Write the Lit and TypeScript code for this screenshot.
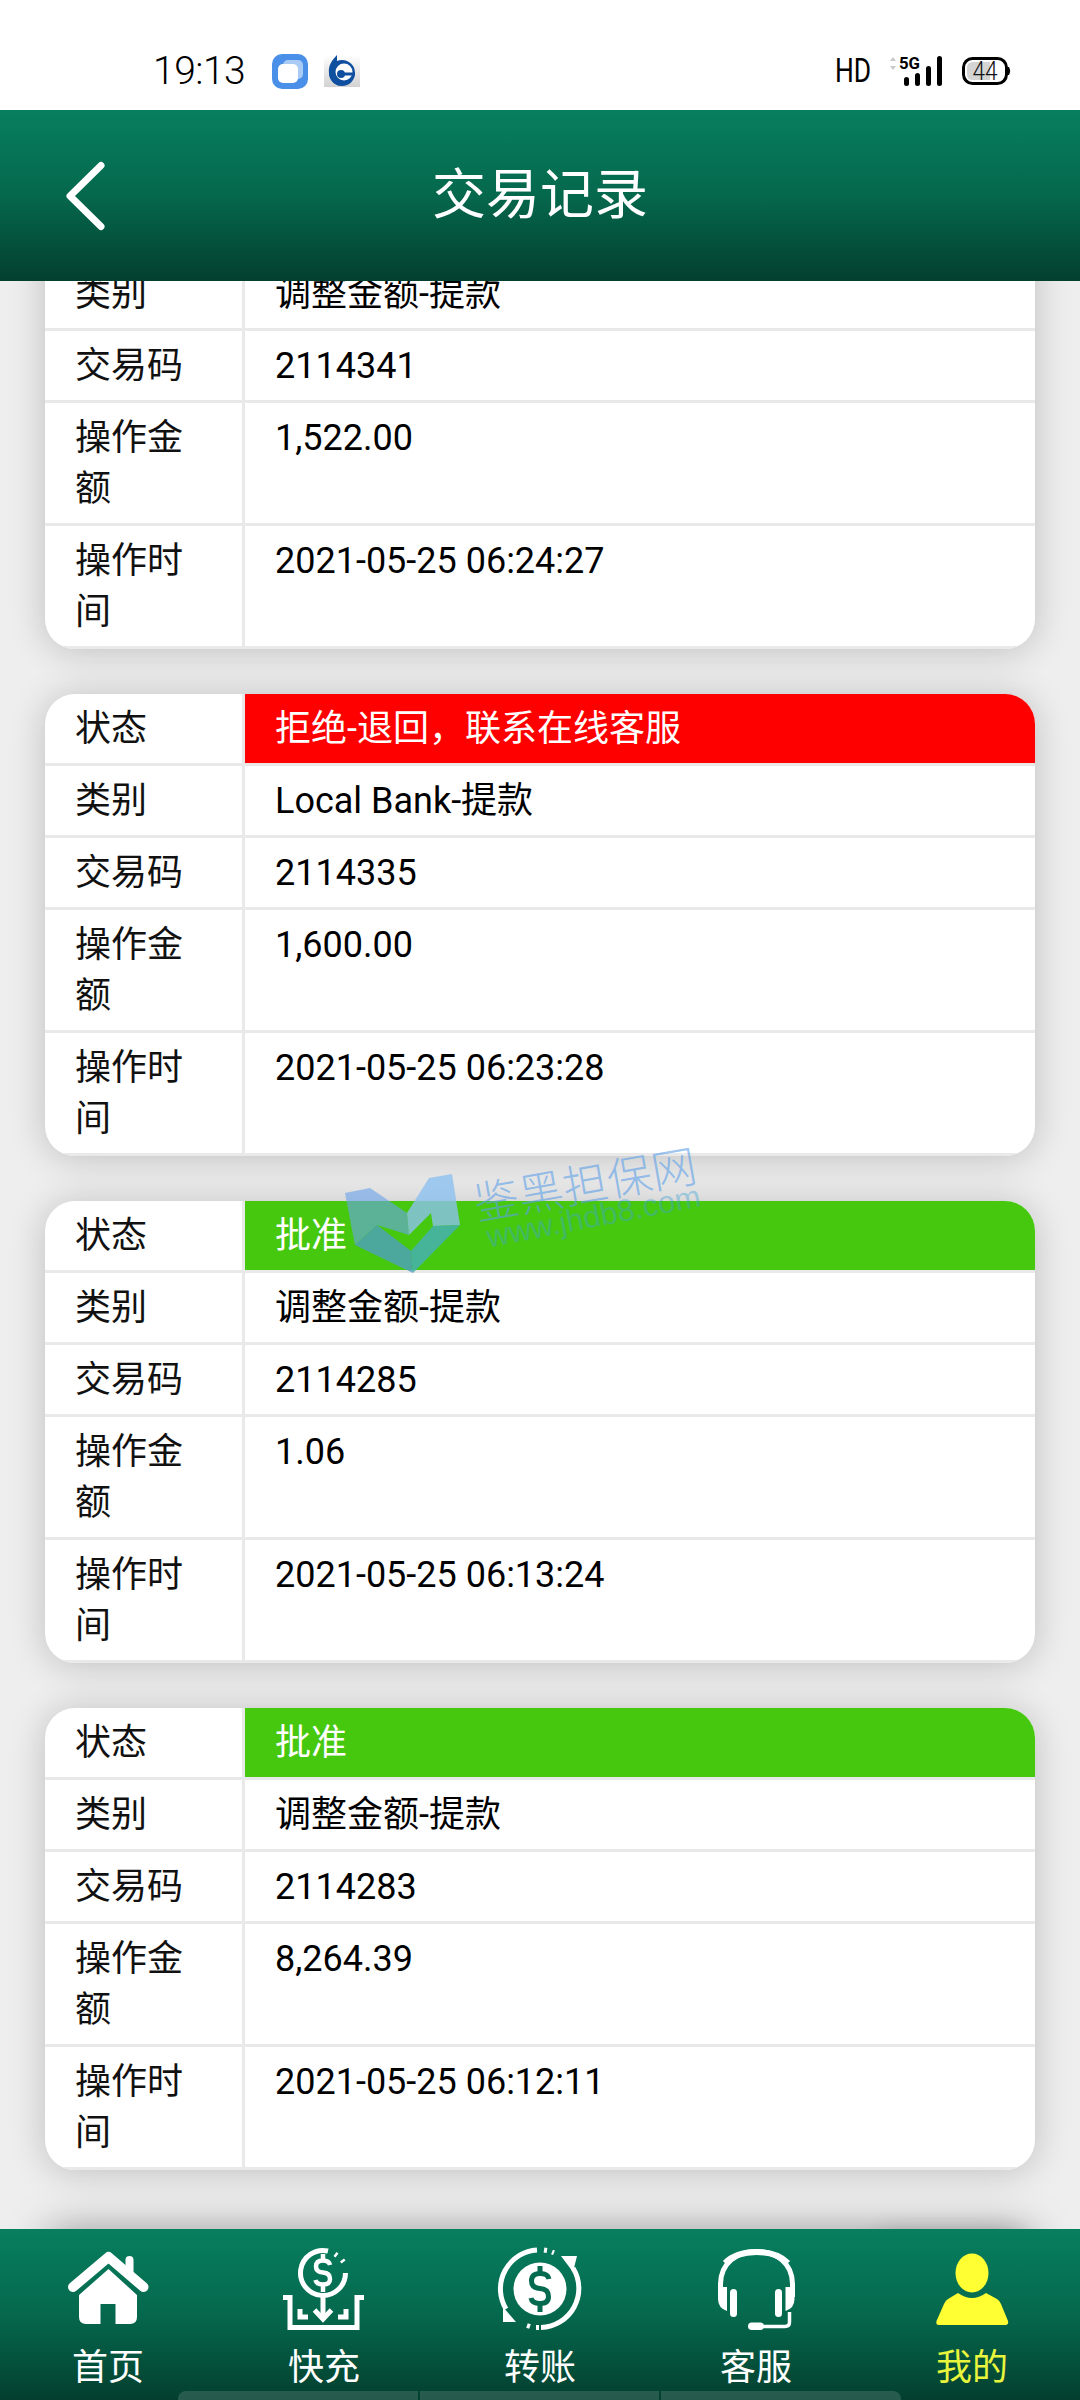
import { LitElement, html, css, svg } from "lit";
import { customElement } from "lit/decorators.js";

type Rec = { status: string; tone: string; kind: string; code: string; amount: string; time: string };

const RECORDS: Rec[] = [
  { status: "批准", tone: "ok", kind: "调整金额-提款", code: "2114341", amount: "1,522.00", time: "2021-05-25 06:24:27" },
  { status: "拒绝-退回，联系在线客服", tone: "bad", kind: "Local Bank-提款", code: "2114335", amount: "1,600.00", time: "2021-05-25 06:23:28" },
  { status: "批准", tone: "ok", kind: "调整金额-提款", code: "2114285", amount: "1.06", time: "2021-05-25 06:13:24" },
  { status: "批准", tone: "ok", kind: "调整金额-提款", code: "2114283", amount: "8,264.39", time: "2021-05-25 06:12:11" },
];

const homeIcon = svg`<g transform="translate(-68 -2252)" fill="#fff" stroke="none">
  <path d="M73 2288 L108.5 2258 L143.5 2288" fill="none" stroke="#fff" stroke-width="10" stroke-linecap="round" stroke-linejoin="round"/>
  <path d="M129.500 2274 V2261" fill="none" stroke="#fff" stroke-width="8" stroke-linecap="round"/>
  <path fill-rule="evenodd" d="M108.500 2270 L137 2296 V2318 Q137 2325 130 2325 H115.500 V2305 H100.500 V2325 H86 Q79 2325 79 2318 V2296 Z"/>
</g>`;

const depositIcon = svg`<g transform="translate(-280 -2245)" fill="none" stroke="#fff" stroke-width="5">
  <path d="M329 2250 A22.500 22.500 0 1 0 346.500 2272"/>
  <path d="M336 2253 L338 2254.500 M343 2259 L344.500 2261" stroke-width="5"/>
  <path d="M331 2264 Q330 2259.500 324 2259.500 Q317 2259.500 317 2265.500 Q317 2271 324 2271.500 Q331 2272 331 2278 Q331 2283.500 324 2283.500 Q317.500 2283.500 316.500 2279" stroke-width="4.500"/>
  <path d="M324 2253 V2259 M324 2284 V2291" stroke-width="4.500"/>
  <path d="M324 2295 V2316" stroke-width="5"/>
  <path d="M315.500 2309 L324 2318 L332.500 2309" stroke-width="5"/>
  <path d="M284 2296.500 H291 V2326.500 H358 V2296.500 H365"/>
  <path d="M301 2308 V2316 H309 M347 2308 V2316 H339" stroke-width="5"/>
</g>`;

const transferIcon = svg`<g transform="translate(-498 -2246)" fill="none" stroke="#fff" stroke-width="5">
  <circle cx="540" cy="2289" r="26.500" fill="#fff" stroke="none"/>
  <path d="M549 2279 Q548 2273.500 540 2273.500 Q531.500 2273.500 531.500 2281 Q531.500 2288 540 2288.500 Q548.500 2289 548.500 2296.500 Q548.500 2303.500 540 2303.500 Q532 2303.500 531 2298" stroke="#046a4f" stroke-width="5"/>
  <path d="M540 2266 V2274 M540 2304 V2312" stroke="#046a4f" stroke-width="5"/>
  <path d="M537 2250 A39 39 0 0 0 506 2309"/>
  <path d="M503 2307 V2322 H516 Z" fill="#fff" stroke="none"/>
  <path d="M541 2327.500 A39 39 0 0 0 573 2268"/>
  <path d="M577 2256 H561 L573 2272 Z" fill="#fff" stroke="none"/>
  <path d="M544 2250 L547 2250.500 M552 2252 L554 2252.800 M527 2325.500 L530 2326.500 M536 2327.500 L539 2327.500"/>
</g>`;

const headsetIcon = svg`<g transform="translate(-714 -2245)" fill="none" stroke="#fff">
  <path d="M720.500 2296 V2283 C720.500 2262 737 2250.500 756.500 2250.500 C776 2250.500 792.500 2262 792.500 2283 V2296" stroke-width="5"/>
  <path d="M725 2262 C733 2254 745 2251 756.500 2251 C768 2251 780 2254 788 2262" stroke-width="6"/>
  <rect x="730" y="2288" width="7" height="28" rx="3.500" fill="#fff" stroke="none"/>
  <rect x="775" y="2288" width="7" height="28" rx="3.500" fill="#fff" stroke="none"/>
  <path d="M718 2286 H727 V2310 Q718 2307 718 2298 Z" fill="#fff" stroke="none"/>
  <path d="M794.500 2286 H785.500 V2310 Q794.500 2307 794.500 2298 Z" fill="#fff" stroke="none"/>
  <path d="M789.500 2311 V2321 Q789.500 2325.500 785 2325.500 H760" stroke-width="3.500"/>
  <rect x="748" y="2321.500" width="16" height="7.500" rx="3.750" fill="#fff" stroke="none"/>
</g>`;

const personIcon = svg`<g transform="translate(-932 -2250)" fill="#ffff33">
  <ellipse cx="972" cy="2272" rx="16.500" ry="19.500"/>
  <path d="M958 2292 Q972 2302 986 2292 L997 2298 Q1000 2300 1001 2303 L1008 2320 Q1009 2324 1005 2324 H939 Q935.500 2324 936.500 2320 L944 2303 Q945 2300 948 2298 Z"/>
</g>`;

const TABS = [
  { label: "首页", w: 80, h: 76, icon: homeIcon },
  { label: "快充", w: 90, h: 86, icon: depositIcon },
  { label: "转账", w: 84, h: 86, icon: transferIcon },
  { label: "客服", w: 84, h: 86, icon: headsetIcon },
  { label: "我的", w: 80, h: 76, icon: personIcon, active: true },
];

@customElement("app-root")
export class AppRoot extends LitElement {
  static styles = css`
    :host {
      display: block;
      width: 1080px;
      height: 2400px;
      font-family: Roboto, "Noto Sans CJK SC", sans-serif;
      color: #111;
    }
    .page {
      position: relative;
      display: flex;
      flex-direction: column;
      height: 2400px;
      overflow: hidden;
      background: #eeeeee;
    }
    .status {
      display: flex;
      justify-content: space-between;
      align-items: center;
      box-sizing: border-box;
      height: 110px;
      padding: 32px 69px 0 153px;
      background: #fff;
      flex: none;
    }
    .status-left, .status-right { display: flex; align-items: center; }
    .time {
      width: 119px;
      font-size: 39px;
      font-weight: 300;
      line-height: 40px;
      letter-spacing: -0.5px;
      color: #000;
    }
    .app-a { margin-right: 16px; }
    .hd {
      display: block;
      width: 36px;
      margin-right: 15px;
      font-size: 33px;
      line-height: 34px;
      color: #000;
      transform: scaleX(0.8);
      transform-origin: left center;
      white-space: nowrap;
    }
    .signal { margin-right: 20px; }
    svg { display: block; overflow: visible; }
    .head {
      position: relative;
      display: flex;
      align-items: center;
      justify-content: center;
      flex: none;
      height: 171px;
      background: linear-gradient(180deg, #077f5f 0%, #05684d 50%, #033f2e 100%);
      color: #fff;
      font-size: 54px;
      line-height: 60px;
      z-index: 2;
    }
    .back { position: absolute; left: 60px; top: 48px; }
    .list {
      position: relative;
      flex: 1;
      min-height: 0;
      overflow: hidden;
    }
    .rows {
      display: flex;
      flex-direction: column;
      gap: 45px;
      padding: 0 45px;
      margin-top: -94px;
    }
    .card {
      flex: none;
      background: #fff;
      border-radius: 30px;
      overflow: hidden;
      box-shadow: 0 2px 36px rgba(0, 0, 0, 0.2);
    }
    .row { display: flex; border-bottom: 3px solid #e9e9e9; }
    .label, .value {
      box-sizing: border-box;
      padding: 10px 30px 8px;
      font-size: 36px;
      line-height: 51px;
    }
    .label {
      flex: none;
      width: 200px;
      border-right: 3px solid #e9e9e9;
    }
    .value { flex: 1; min-width: 0; color: #000; }
    .ok { background: #46c80f; color: #fff; }
    .bad { background: #ff0000; color: #fff; }
    .shade {
      flex: none;
      height: 40px;
      margin-top: 14px;
      border-radius: 30px;
      background: #bdbdbd;
      box-shadow: 0 0 40px rgba(0, 0, 0, 0.36);
    }
    .lift {
      position: absolute;
      right: 55px;
      bottom: -44px;
      width: 150px;
      height: 34px;
      border-radius: 20px;
      background: #999;
      box-shadow: 0 0 26px rgba(0, 0, 0, 0.32);
    }
    .tabs {
      position: relative;
      display: grid;
      grid-template-columns: repeat(5, 1fr);
      flex: none;
      height: 171px;
      background: linear-gradient(180deg, #077f5f 0%, #05684d 50%, #033f2e 100%);
      z-index: 2;
    }
    .tab {
      display: flex;
      flex-direction: column;
      align-items: center;
      color: #fff;
      font-size: 36px;
      line-height: 40px;
    }
    .icon {
      display: flex;
      align-items: center;
      justify-content: center;
      height: 119px;
      padding: 6px 0;
      box-sizing: border-box;
    }
    .tab.on { color: #e9f53c; }
    .bar {
      position: absolute;
      left: 178px;
      bottom: 0;
      display: flex;
      gap: 2px;
      width: 723px;
    }
    .bar i {
      flex: 1;
      height: 9px;
      background: rgba(255, 255, 255, 0.14);
    }
    .bar i:first-child { border-top-left-radius: 8px; }
    .bar i:last-child { border-top-right-radius: 8px; }
    .mark {
      position: absolute;
      left: 345px;
      top: 1150px;
      width: 380px;
      height: 130px;
      pointer-events: none;
      z-index: 3;
    }
    .mark-logo { position: absolute; left: 0; top: 23px; }
    .mark-cn {
      position: absolute;
      left: 128px;
      top: 11px;
      font-size: 45px;
      line-height: 50px;
      font-weight: 300;
      color: rgba(92, 160, 232, 0.62);
      white-space: nowrap;
      transform: rotate(-10deg);
    }
    .mark-url {
      position: absolute;
      left: 140px;
      top: 49px;
      font-family: "Liberation Sans", sans-serif;
      font-size: 31px;
      line-height: 36px;
      color: rgba(60, 165, 215, 0.42);
      white-space: nowrap;
      transform: rotate(-11deg);
    }
  `;

  private card(r: Rec) {
    return html`<section class="card">
      <div class="row"><div class="label">状态</div><div class="value ${r.tone}">${r.status}</div></div>
      <div class="row"><div class="label">类别</div><div class="value">${r.kind}</div></div>
      <div class="row"><div class="label">交易码</div><div class="value">${r.code}</div></div>
      <div class="row"><div class="label">操作金额</div><div class="value">${r.amount}</div></div>
      <div class="row"><div class="label">操作时间</div><div class="value">${r.time}</div></div>
    </section>`;
  }

  render() {
    return html`<div class="page">
      <div class="status">
        <div class="status-left">
          <span class="time">19:13</span>
          <svg class="app-a" width="36" height="35" viewBox="0 0 36 35">
            <rect width="36" height="35" rx="10" fill="#4a8fe8"/>
            <rect x="11" y="6" width="20" height="19" rx="5" fill="#a9cbf5"/>
            <rect x="6" y="10" width="20" height="19" rx="5" fill="#fff"/>
          </svg>
          <svg width="36" height="32" viewBox="0 0 36 32">
            <defs><linearGradient id="g" x1="0" y1="0" x2="0" y2="1"><stop offset="0" stop-color="#fff"/><stop offset="1" stop-color="#d2d2d2"/></linearGradient></defs>
            <rect width="36" height="32" fill="url(#g)"/>
            <circle cx="18" cy="18" r="13" fill="#0f4fa0"/>
            <path d="M13 0 C8 5 4 11 5 18 C6 25 10 29 16 31 C12 26 11 20 13 15 Z" fill="#0f4fa0"/>
            <circle cx="20" cy="17" r="8.500" fill="#fff"/>
            <circle cx="17" cy="19" r="4" fill="#0f4fa0"/>
            <rect x="17" y="17.500" width="14" height="3" fill="#0f4fa0"/>
          </svg>
        </div>
        <div class="status-right">
          <span class="hd">HD</span>
          <svg class="signal" width="56" height="30" viewBox="0 0 56 30">
            <path d="M4 5 L7 1 L10 5 Z M4 10 L7 14 L10 10 Z" fill="#c8c8c8"/>
            <text x="13" y="13" font-family="Roboto, sans-serif" font-size="17" font-weight="700" textLength="21" lengthAdjust="spacingAndGlyphs" fill="#000">5G</text>
            <rect x="18" y="21" width="5" height="9" rx="2.500" fill="#000"/>
            <rect x="29" y="17" width="5" height="13" rx="2.500" fill="#000"/>
            <rect x="40" y="10" width="5" height="20" rx="2.500" fill="#000"/>
            <rect x="51" y="0" width="5" height="30" rx="2.500" fill="#000"/>
          </svg>
          <svg width="49" height="28" viewBox="0 0 49 28">
            <rect x="1.500" y="1.500" width="43" height="25" rx="9" fill="#fff" stroke="#000" stroke-width="3"/>
            <path d="M5 11 Q5 5 11 5 H28 V23 H11 Q5 23 5 17 Z" fill="#d4d4d4"/>
            <path d="M46.500 10 Q49 14 46.500 18 Z" fill="#000" stroke="#000" stroke-width="1"/>
            <text x="23" y="23" text-anchor="middle" font-family="Roboto, sans-serif" font-weight="300" font-size="25" textLength="25" lengthAdjust="spacingAndGlyphs" fill="#111">44</text>
          </svg>
        </div>
      </div>

      <header class="head">
        <svg class="back" width="52" height="76" viewBox="0 0 52 76">
          <path d="M41 7.500 L10 38 L41 68.500" fill="none" stroke="#fff" stroke-width="7" stroke-linecap="round" stroke-linejoin="round"/>
        </svg>
        <span>交易记录</span>
      </header>

      <main class="list">
        <div class="rows">
          ${RECORDS.map((r) => this.card(r))}
          <div class="shade"></div>
        </div>
        <div class="lift"></div>
      </main>

      <nav class="tabs">
        ${TABS.map(
          (t) => html`<div class="tab ${t.active ? "on" : ""}">
            <div class="icon">
              <svg width=${t.w} height=${t.h} viewBox="0 0 ${t.w} ${t.h}">${t.icon}</svg>
            </div>
            <span>${t.label}</span>
          </div>`
        )}
        <div class="bar"><i></i><i></i><i></i></div>
      </nav>

      <div class="mark">
        <svg class="mark-logo" width="115" height="100" viewBox="0 0 115 100">
          <path d="M0 20 L25 15 L62 40 L64 62 L32 52 L10 72 Z" fill="#6ba4ea" opacity="0.62"/>
          <path d="M62 40 L84 5 L107 1 L115 52 L88 53 L86 40 L64 62 Z" fill="#8cc0ef" opacity="0.8"/>
          <path d="M10 72 L32 52 L66 78 L68 100 Z" fill="#4e9fc0" opacity="0.8"/>
          <path d="M66 78 L88 53 L115 52 L68 100 Z" fill="#47b0b0" opacity="0.85"/>
        </svg>
        <span class="mark-cn">鉴黑担保网</span>
        <span class="mark-url">www.jhdb8.com</span>
      </div>
    </div>`;
  }
}
